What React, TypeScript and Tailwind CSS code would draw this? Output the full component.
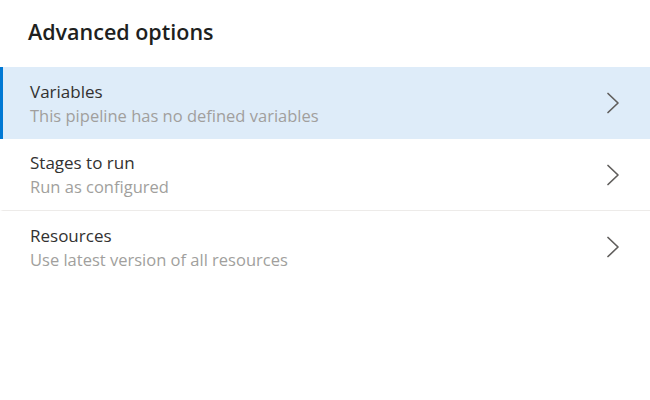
const rows = [
  { title: 'Variables', sub: 'This pipeline has no defined variables', selected: true },
  { title: 'Stages to run', sub: 'Run as configured', selected: false },
  { title: 'Resources', sub: 'Use latest version of all resources', selected: false },
];

function Chevron() {
  return (
    <svg width="14" height="22" viewBox="0 0 14 22" fill="none" className="text-[#605e5c]">
      <polyline points="2,1.5 12,11 2,20.5" stroke="currentColor" strokeWidth="1.7" strokeLinecap="round" strokeLinejoin="round" />
    </svg>
  );
}

export default function App() {
  return (
    <div className="w-[650px] h-[400px] bg-white" style={{ fontFamily: '"Open Sans", "Noto Sans", sans-serif' }}>
      <h2 className="pl-7 pt-[17px] h-[67px] text-[21.5px] font-semibold text-[#201f1e] leading-[30px]">
        Advanced options
      </h2>
      <div>
        {rows.map((row, i) => (
          <div
            key={row.title}
            className={`flex items-center justify-between h-[72px] pr-[30px] border-l-[3px] ${
              row.selected ? 'bg-[#deecf9] border-[#0078d4]' : 'border-transparent'
            } ${i === 1 ? 'border-b border-b-[#edebe9]' : ''}`}
          >
            <div className="pl-[27px] pt-[1px]">
              <div className="text-[17px] leading-[24px] text-[#323130]">{row.title}</div>
              <div className="text-[16.5px] leading-[24px] text-[#a19f9d]">{row.sub}</div>
            </div>
            <Chevron />
          </div>
        ))}
      </div>
    </div>
  );
}
